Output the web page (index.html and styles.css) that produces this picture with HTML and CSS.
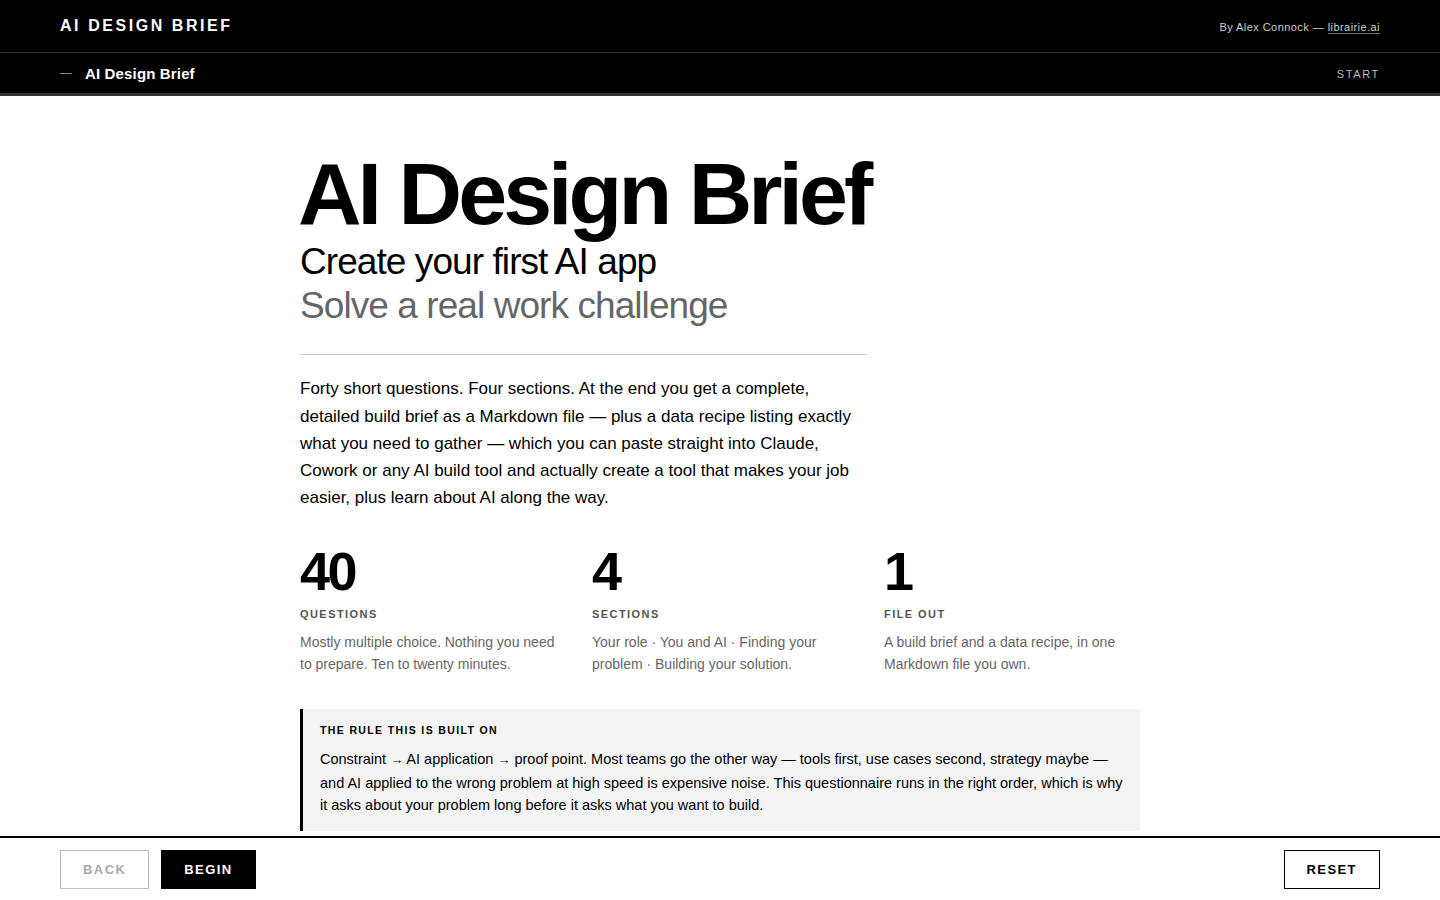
FILE: index.html
```html
<!DOCTYPE html>
<html lang="en">
<head>
<meta charset="utf-8">
<title>AI Design Brief</title>
<link rel="stylesheet" href="styles.css">
</head>
<body>
<header class="topbar">
  <div class="brand">AI DESIGN BRIEF</div>
  <div class="byline">By Alex Connock — <a class="byline-link" href="#">librairie.ai</a></div>
</header>
<nav class="subbar">
  <div class="crumb"><span class="dash">—</span><span class="crumb-title">AI Design Brief</span></div>
  <div class="step">START</div>
</nav>
<main class="main">
  <section class="hero">
    <h1 class="title">AI Design Brief</h1>
    <p class="sub">Create your first AI app</p>
    <p class="sub sub-muted">Solve a real work challenge</p>
    <hr class="rule">
    <p class="intro">Forty short questions. Four sections. At the end you get a complete, detailed build brief as a Markdown file — plus a data recipe listing exactly what you need to gather — which you can paste straight into Claude, Cowork or any AI build tool and actually create a tool that makes your job easier, plus learn about AI along the way.</p>
  </section>
  <section class="stats">
    <div class="stat">
      <div class="stat-num">40</div>
      <div class="stat-label">QUESTIONS</div>
      <p class="stat-desc">Mostly multiple choice. Nothing you need to prepare. Ten to twenty minutes.</p>
    </div>
    <div class="stat">
      <div class="stat-num">4</div>
      <div class="stat-label">SECTIONS</div>
      <p class="stat-desc">Your role · You and AI · Finding your problem · Building your solution.</p>
    </div>
    <div class="stat">
      <div class="stat-num">1</div>
      <div class="stat-label">FILE OUT</div>
      <p class="stat-desc">A build brief and a data recipe, in one Markdown file you own.</p>
    </div>
  </section>
  <aside class="callout">
    <div class="callout-label">THE RULE THIS IS BUILT ON</div>
    <p class="callout-text">Constraint <span class="arrow">→</span> AI application <span class="arrow">→</span> proof point. Most teams go the other way — tools first, use cases second, strategy maybe — and AI applied to the wrong problem at high speed is expensive noise. This questionnaire runs in the right order, which is why it asks about your problem long before it asks what you want to build.</p>
  </aside>
</main>
<footer class="footer">
  <div class="footer-left">
    <button class="btn btn-disabled">BACK</button>
    <button class="btn btn-primary">BEGIN</button>
  </div>
  <button class="btn btn-outline">RESET</button>
</footer>
</body>
</html>
```

FILE: styles.css
```css
* { box-sizing: border-box; }
html, body { margin: 0; padding: 0; }
body {
  font-family: "Liberation Sans", Arial, sans-serif;
  color: #000;
  background: #fff;
}
.topbar {
  background: #000;
  height: 53px;
  border-bottom: 1px solid #333;
  display: flex;
  align-items: center;
  justify-content: space-between;
  padding: 0 60px;
}
.brand {
  color: #fff;
  font-weight: 700;
  font-size: 16px;
  letter-spacing: 0.16em;
}
.byline {
  color: #ccc;
  font-size: 11px;
  letter-spacing: 0.04em;
  padding-top: 2px;
}
.byline-link {
  color: #ccc;
  text-decoration: none;
  border-bottom: 1px solid #777;
}
.subbar {
  background: #000;
  height: 43px;
  border-bottom: 3px solid #333;
  display: flex;
  align-items: center;
  justify-content: space-between;
  padding: 0 60px;
}
.crumb { display: flex; align-items: center; }
.dash { color: #888; font-size: 12px; margin-right: 13px; }
.crumb-title { color: #fff; font-weight: 700; font-size: 15px; letter-spacing: 0.01em; }
.step { color: #bbb; font-size: 11px; letter-spacing: 0.15em; padding-top: 2px; }
.main {
  width: 840px;
  margin: 0 auto;
  padding: 52px 0 120px;
}
.title {
  margin: 0 0 0 -2px;
  font-size: 88px;
  font-weight: 700;
  letter-spacing: -0.045em;
  line-height: 1.05;
  white-space: nowrap;
}
.sub {
  margin: 0;
  font-size: 37px;
  letter-spacing: -0.025em;
  line-height: 44px;
}
.sub-muted { color: #666; }
.rule {
  width: 567px;
  border: 0;
  border-top: 1px solid #ccc;
  margin: 26px 0 0;
}
.intro {
  width: 567px;
  margin: 20px 0 0;
  font-size: 17px;
  line-height: 27.2px;
}
.stats {
  display: grid;
  grid-template-columns: repeat(3, 1fr);
  column-gap: 36px;
  margin-top: 33px;
}
.stat-num {
  font-size: 54px;
  font-weight: 700;
  letter-spacing: -0.045em;
  line-height: 1;
}
.stat-label {
  margin-top: 10px;
  font-size: 11px;
  font-weight: 700;
  letter-spacing: 0.13em;
  color: #555;
}
.stat-desc {
  margin: 12px 0 0;
  font-size: 14px;
  line-height: 21.5px;
  color: #666;
}
.callout {
  margin-top: 34px;
  background: #f4f4f4;
  border-left: 3px solid #000;
  padding: 15px 17px 14px;
}
.callout-label {
  font-size: 10.5px;
  font-weight: 700;
  letter-spacing: 0.13em;
}
.callout-text {
  margin: 12px 0 0;
  font-size: 14.5px;
  line-height: 22.5px;
}
.arrow { font-size: 13px; }
.footer {
  position: fixed;
  left: 0;
  right: 0;
  bottom: 0;
  height: 64px;
  background: #fff;
  border-top: 2px solid #000;
  display: flex;
  align-items: center;
  justify-content: space-between;
  padding: 0 60px;
}
.footer-left { display: flex; gap: 12px; }
.btn {
  font-family: "Liberation Sans", Arial, sans-serif;
  font-size: 13px;
  font-weight: 700;
  letter-spacing: 0.11em;
  height: 39px;
  padding: 0 22px;
  background: #fff;
  border: 1px solid #000;
  color: #000;
}
.btn-disabled { border-color: #bbb; color: #aaa; }
.btn-primary { background: #000; color: #fff; }
.btn-outline { background: #fff; }
```
